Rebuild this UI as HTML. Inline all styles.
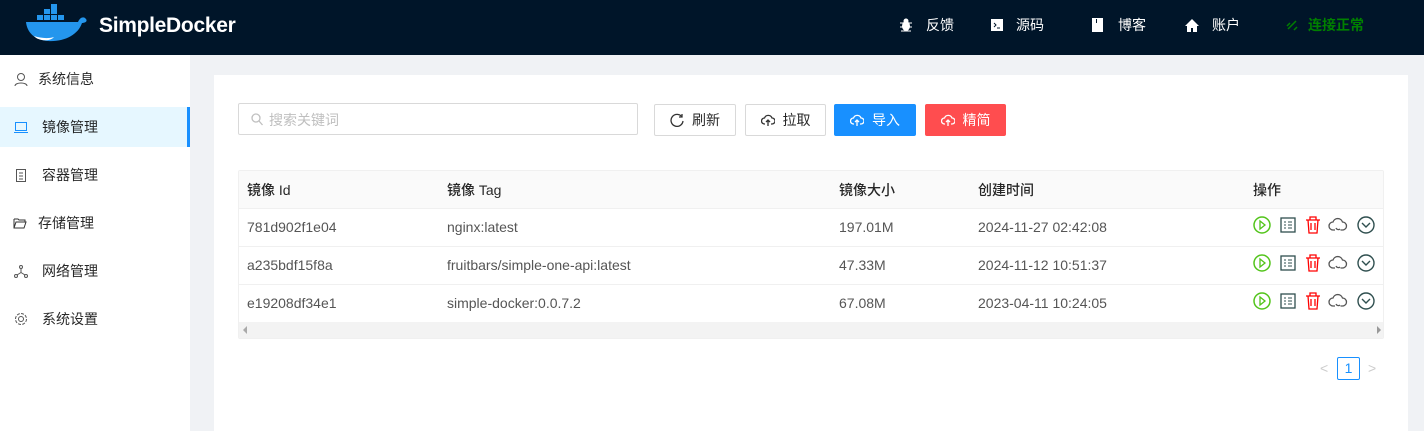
<!DOCTYPE html>
<html><head><meta charset="utf-8"><style>
*{box-sizing:border-box;margin:0;padding:0}
body{width:1424px;height:431px;overflow:hidden;font-family:"Liberation Sans","Noto Sans CJK SC",sans-serif;font-size:14px;color:rgba(0,0,0,.85);background:#f0f2f5;position:relative}
.hdr{position:absolute;left:0;top:0;width:1424px;height:55px;background:#001529;color:#fff}
.logo{position:absolute;left:99px;top:14px;font-size:21px;font-weight:bold;letter-spacing:-0.3px}
.nav{position:absolute;top:15px;font-size:14px;display:flex;align-items:center}
.side{position:absolute;left:0;top:55px;width:190px;height:376px;background:#fff}
.mi{position:absolute;left:0;width:190px;height:40px;display:flex;align-items:center;font-size:14px}
.mi svg{position:absolute;left:14px}
.mi.act{background:#e6f7ff;color:#1890ff;border-right:3px solid #1890ff}
.mi.act span{color:rgba(0,0,0,.85)}
.card{position:absolute;left:214px;top:75px;width:1194px;height:356px;background:#fff}
.search{position:absolute;left:238px;top:103px;width:400px;height:32px;border:1px solid #d9d9d9;border-radius:2px;color:#bfbfbf;padding:6px 0 0 30px}
.btn{position:absolute;top:104px;height:32px;border:1px solid #d9d9d9;border-radius:2px;display:flex;align-items:center;justify-content:center;gap:8px;background:#fff}
.tbl{position:absolute;left:238px;top:170px;width:1146px;height:169px;border:1px solid #f0f0f0;border-radius:2px;overflow:hidden}
.row{position:absolute;left:0;width:1146px;height:38px;border-bottom:1px solid #f0f0f0;font-size:14px;color:#555}
.row div{position:absolute;top:10px}
.th{background:#fafafa;font-weight:500;color:rgba(0,0,0,.85)}
.th div{top:9px}
</style></head><body>
<div class="hdr">
<svg style="position:absolute;left:24px;top:3px" width="66" height="42" viewBox="0 0 66 38"><g fill="#2496ed"><rect x="13" y="10" width="6" height="5"/><rect x="20" y="10" width="6" height="5"/><rect x="27" y="10" width="6" height="5"/><rect x="20" y="4" width="6" height="5"/><rect x="27" y="4" width="6" height="5"/><rect x="34" y="10" width="6" height="5"/><rect x="27" y="-1" width="6" height="5"/><path d="M2 17 H54 C56 12 60 11 62 14 C64 17 60 18 58 18 C54 30 40 37 24 36 C10 35 3 27 2 17Z"/></g><path d="M10 31 C16 33 24 34 30 32 C26 37 14 36 10 31Z" fill="#fff"/></svg>
<div class="logo">SimpleDocker</div>
<div class="nav" style="left:899px"><svg width="14" height="14" viewBox="0 0 14 14" fill="#fff"><ellipse cx="7" cy="8" rx="4" ry="5"/><circle cx="7" cy="3" r="2.5"/><path d="M1 5h12M1 9h12M2 13h10" stroke="#fff"/></svg><span style="margin-left:13px">反馈</span></div>
<div class="nav" style="left:990px"><svg width="14" height="14"><rect x="1" y="1" width="12" height="12" fill="#fff"/><path d="M4 5l2 2-2 2M7 10h3" stroke="#001529" fill="none"/></svg><span style="margin-left:12px">源码</span></div>
<div class="nav" style="left:1090px"><svg width="14" height="14"><rect x="2" y="0" width="11" height="14" fill="#fff"/><rect x="6" y="1" width="1" height="4" fill="#001529"/></svg><span style="margin-left:14px">博客</span></div>
<div class="nav" style="left:1185px"><svg width="14" height="14"><path d="M7 1L0 8h2v6h4v-4h2v4h4V8h2z" fill="#fff"/></svg><span style="margin-left:13px">账户</span></div>
<div class="nav" style="left:1286px;color:#008000;font-weight:bold"><svg width="12" height="12"><path d="M2 10l8-8M1 7l3-3M8 11l3-3" stroke="#008000" stroke-width="1.5" fill="none"/></svg><span style="margin-left:10px">连接正常</span></div>
</div>
<div class="side">
<div class="mi" style="top:4px"><svg width="14" height="14" fill="none" stroke="#555"><circle cx="7" cy="5" r="3.5"/><path d="M1 14c0-4 12-4 12 0"/></svg><span style="margin-left:38px">系统信息</span></div>
<div class="mi act" style="top:52px"><svg width="14" height="14" fill="none" stroke="#1890ff"><rect x="1.5" y="2.5" width="11" height="8"/><path d="M0 12.5h14"/></svg><span style="margin-left:42px">镜像管理</span></div>
<div class="mi" style="top:100px"><svg width="14" height="14" fill="none" stroke="#555"><rect x="2.5" y="1.5" width="9" height="12"/><path d="M5 5h4M5 8h4M5 11h4"/></svg><span style="margin-left:42px">容器管理</span></div>
<div class="mi" style="top:148px"><svg width="14" height="14" fill="none" stroke="#333" style="left:13px"><path d="M1 3h4l1 1h6v2M1 3v9h10l2-6H3l-2 6"/></svg><span style="margin-left:38px">存储管理</span></div>
<div class="mi" style="top:196px"><svg width="14" height="14" fill="none" stroke="#555"><circle cx="7" cy="3" r="1.5"/><circle cx="2" cy="12" r="1.5"/><circle cx="12" cy="12" r="1.5"/><path d="M7 4.5v4L3 11M7 8.5l4 2.5"/></svg><span style="margin-left:42px">网络管理</span></div>
<div class="mi" style="top:244px"><svg width="14" height="14" fill="none" stroke="#555"><circle cx="7" cy="7" r="2.5"/><circle cx="7" cy="7" r="5.5" stroke-dasharray="3 1.3"/></svg><span style="margin-left:42px">系统设置</span></div>
</div>
<div class="card"></div>
<div class="search"><svg style="position:absolute;left:12px;top:9px" width="12" height="13" fill="none" stroke="#bfbfbf" stroke-width="1.3"><circle cx="5" cy="5" r="4"/><path d="M8 8l3.5 4"/></svg>搜索关键词</div>
<div class="btn" style="left:654px;width:82px"><svg width="14" height="14" fill="none" stroke="#333" stroke-width="1.3"><path d="M12 4A6 6 0 1 0 13 8"/><path d="M12 1v3H9"/></svg>刷新</div>
<div class="btn" style="left:745px;width:81px"><svg width="14" height="14" fill="none" stroke="#333" stroke-width="1.3"><path d="M4 11H3.5a3 3 0 0 1 0-6 4 4 0 0 1 7.5 0 3 3 0 0 1 0 6H10M7 13V7M5 9l2-2 2 2"/></svg>拉取</div>
<div class="btn" style="left:834px;width:82px;background:#1890ff;border-color:#1890ff;color:#fff"><svg width="14" height="14" fill="none" stroke="#fff" stroke-width="1.3"><path d="M4 11H3.5a3 3 0 0 1 0-6 4 4 0 0 1 7.5 0 3 3 0 0 1 0 6H10M7 13V7M5 9l2-2 2 2"/></svg>导入</div>
<div class="btn" style="left:925px;width:81px;background:#ff4d4f;border-color:#ff4d4f;color:#fff"><svg width="14" height="14" fill="none" stroke="#fff" stroke-width="1.3"><path d="M4 11H3.5a3 3 0 0 1 0-6 4 4 0 0 1 7.5 0 3 3 0 0 1 0 6H10M7 13V7M5 9l2-2 2 2"/></svg>精简</div>
<div class="tbl">
<div class="row th" style="top:0"><div style="left:8px">镜像 Id</div><div style="left:208px">镜像 Tag</div><div style="left:600px">镜像大小</div><div style="left:739px">创建时间</div><div style="left:1014px">操作</div></div>
<div class="row" style="top:38px"><div style="left:8px">781d902f1e04</div><div style="left:208px">nginx:latest</div><div style="left:600px">197.01M</div><div style="left:739px">2024-11-27 02:42:08</div></div>
<div class="row" style="top:76px"><div style="left:8px">a235bdf15f8a</div><div style="left:208px">fruitbars/simple-one-api:latest</div><div style="left:600px">47.33M</div><div style="left:739px">2024-11-12 10:51:37</div></div>
<div class="row" style="top:114px"><div style="left:8px">e19208df34e1</div><div style="left:208px">simple-docker:0.0.7.2</div><div style="left:600px">67.08M</div><div style="left:739px">2023-04-11 10:24:05</div></div>
<div style="position:absolute;left:0;top:151px;width:1146px;height:18px;background:#f3f3f3"><span style="position:absolute;left:4px;top:4px;border:4px solid transparent;border-right-color:#aaa;border-left:0"></span><span style="position:absolute;right:4px;top:4px;border:4px solid transparent;border-left-color:#999;border-right:0"></span></div>
</div>
<svg style="position:absolute;left:1253px;top:215px" width="124" height="100">
<defs><g id="ics">
<circle cx="9" cy="10" r="8" fill="none" stroke="#52c41a" stroke-width="1.5"/><path d="M7 6v8l5-4z" fill="none" stroke="#52c41a" stroke-width="1.3"/>
<rect x="28" y="3" width="14" height="14" fill="none" stroke="#2f4f4f" stroke-width="1.3"/><path d="M31 7h2M35 7h4M31 10h2M35 10h4M31 13h2M35 13h4" stroke="#2f4f4f"/>
<path d="M53 5h14M57 5V2h6v3M55 5l1 13h8l1-13M58 8v7M62 8v7" fill="none" stroke="#f00" stroke-width="1.3"/>
<path d="M82 15h-2a4 4 0 0 1 0-8 5 5 0 0 1 9.5 0 4 4 0 0 1 0 8h-2M83 13a2.5 2.5 0 0 0 4 1" fill="none" stroke="#555" stroke-width="1.3"/>
<circle cx="113" cy="10" r="8" fill="none" stroke="#2f4f4f" stroke-width="1.4"/><path d="M109 8l4 4 4-4" fill="none" stroke="#2f4f4f" stroke-width="1.4"/>
</g></defs>
<use href="#ics"/><use href="#ics" y="38"/><use href="#ics" y="76"/></svg>
<span style="position:absolute;left:1320px;top:360px;color:#ccc">&lt;</span>
<div style="position:absolute;left:1337px;top:357px;width:23px;height:23px;border:1px solid #1890ff;border-radius:2px;color:#1890ff;text-align:center;line-height:21px">1</div>
<span style="position:absolute;left:1368px;top:360px;color:#ccc">&gt;</span>
</body></html>
